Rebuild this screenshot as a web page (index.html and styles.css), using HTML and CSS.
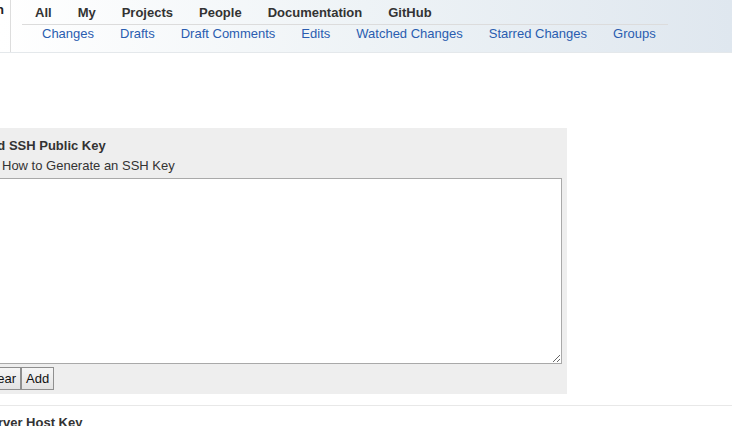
FILE: index.html
```html
<!DOCTYPE html>
<html>
<head>
<meta charset="utf-8">
<link rel="stylesheet" href="styles.css">
</head>
<body>
<div class="header">
  <div class="logo"><span>Sign In</span></div>
  <div class="menus">
    <div class="topmenu">
      <span class="top">All</span>
      <span class="top">My</span>
      <span class="top">Projects</span>
      <span class="top">People</span>
      <span class="top">Documentation</span>
      <span class="top">GitHub</span>
    </div>
    <div class="submenu">
      <a class="sub">Changes</a>
      <a class="sub">Drafts</a>
      <a class="sub">Draft Comments</a>
      <a class="sub">Edits</a>
      <a class="sub">Watched Changes</a>
      <a class="sub">Starred Changes</a>
      <a class="sub">Groups</a>
    </div>
  </div>
</div>

<div class="content">
  <div class="panel">
    <div class="heading">Add SSH Public Key</div>
    <div class="help"><span class="helpprefix">Help:</span><a class="helplink">How to Generate an SSH Key</a></div>
    <textarea class="keybox"></textarea>
    <div class="buttons">
      <button class="btn">Clear</button><button class="btn">Add</button>
    </div>
  </div>
  <div class="sep"></div>
  <div class="heading host">Server Host Key</div>
</div>
</body>
</html>
```

FILE: styles.css
```css
html, body {
  margin: 0;
  padding: 0;
  background: #fff;
  overflow: hidden;
}
body {
  font-family: "Liberation Sans", Arial, sans-serif;
  font-size: 13px;
  line-height: 16px;
  color: #333;
}
.header {
  display: flex;
  height: 52px;
  border-bottom: 1px solid #e4e8eb;
  background: linear-gradient(to right, #ffffff 0%, #eef3f6 50%, #dfe7ef 100%);
}
.logo {
  width: 4px;
  padding-right: 6px;
  display: flex;
  justify-content: flex-end;
  white-space: nowrap;
  overflow: hidden;
  border-right: 1px solid #dddddd;
  padding-top: 2px;
  font-weight: bold;
  color: #222;
}
.menus {
  margin-left: 11px;
  padding-top: 5px;
}
.topmenu {
  display: flex;
  border-bottom: 1px solid #dcdcdc;
  padding-bottom: 3px;
  width: 646px;
}
.top {
  font-weight: bold;
  color: #333;
  padding: 0 13px;
}
.submenu {
  display: flex;
  padding-left: 7px;
  padding-top: 1px;
}
.sub {
  color: #2a5db0;
  padding: 0 13px;
  cursor: pointer;
}
.content {
  margin-top: 75px;
}
.panel {
  width: 582px;
  margin-left: -25px;
  padding: 10px 5px 4px 5px;
  background: #eeeeee;
}
.heading {
  font-weight: bold;
  color: #333;
}
.help {
  margin-top: 0;
  white-space: nowrap;
}
.helpprefix {
  display: inline-block;
  width: 22px;
  overflow: hidden;
  visibility: hidden;
}
.helplink {
  color: #333;
}
.keybox {
  display: block;
  box-sizing: border-box;
  width: 582px;
  height: 186px;
  margin: 4px 0 0 0;
  border: 1px solid #a9a9a9;
  background: #fff;
  font-family: "Liberation Mono", monospace;
  font-size: 13px;
}
.buttons {
  display: flex;
  margin-top: 3px;
}
.btn {
  box-sizing: border-box;
  height: 23px;
  padding: 0 4px;
  margin: 0;
  font-family: "Liberation Sans", Arial, sans-serif;
  font-size: 13px;
  color: #111;
  background: linear-gradient(#f6f6f6, #e3e3e3);
  border: 1px solid #8f8f8f;
  border-radius: 0;
}
.sep {
  margin-top: 11px;
  height: 1px;
  background: #e8e8e8;
}
.host {
  margin-top: 9px;
  margin-left: -18px;
}
```
